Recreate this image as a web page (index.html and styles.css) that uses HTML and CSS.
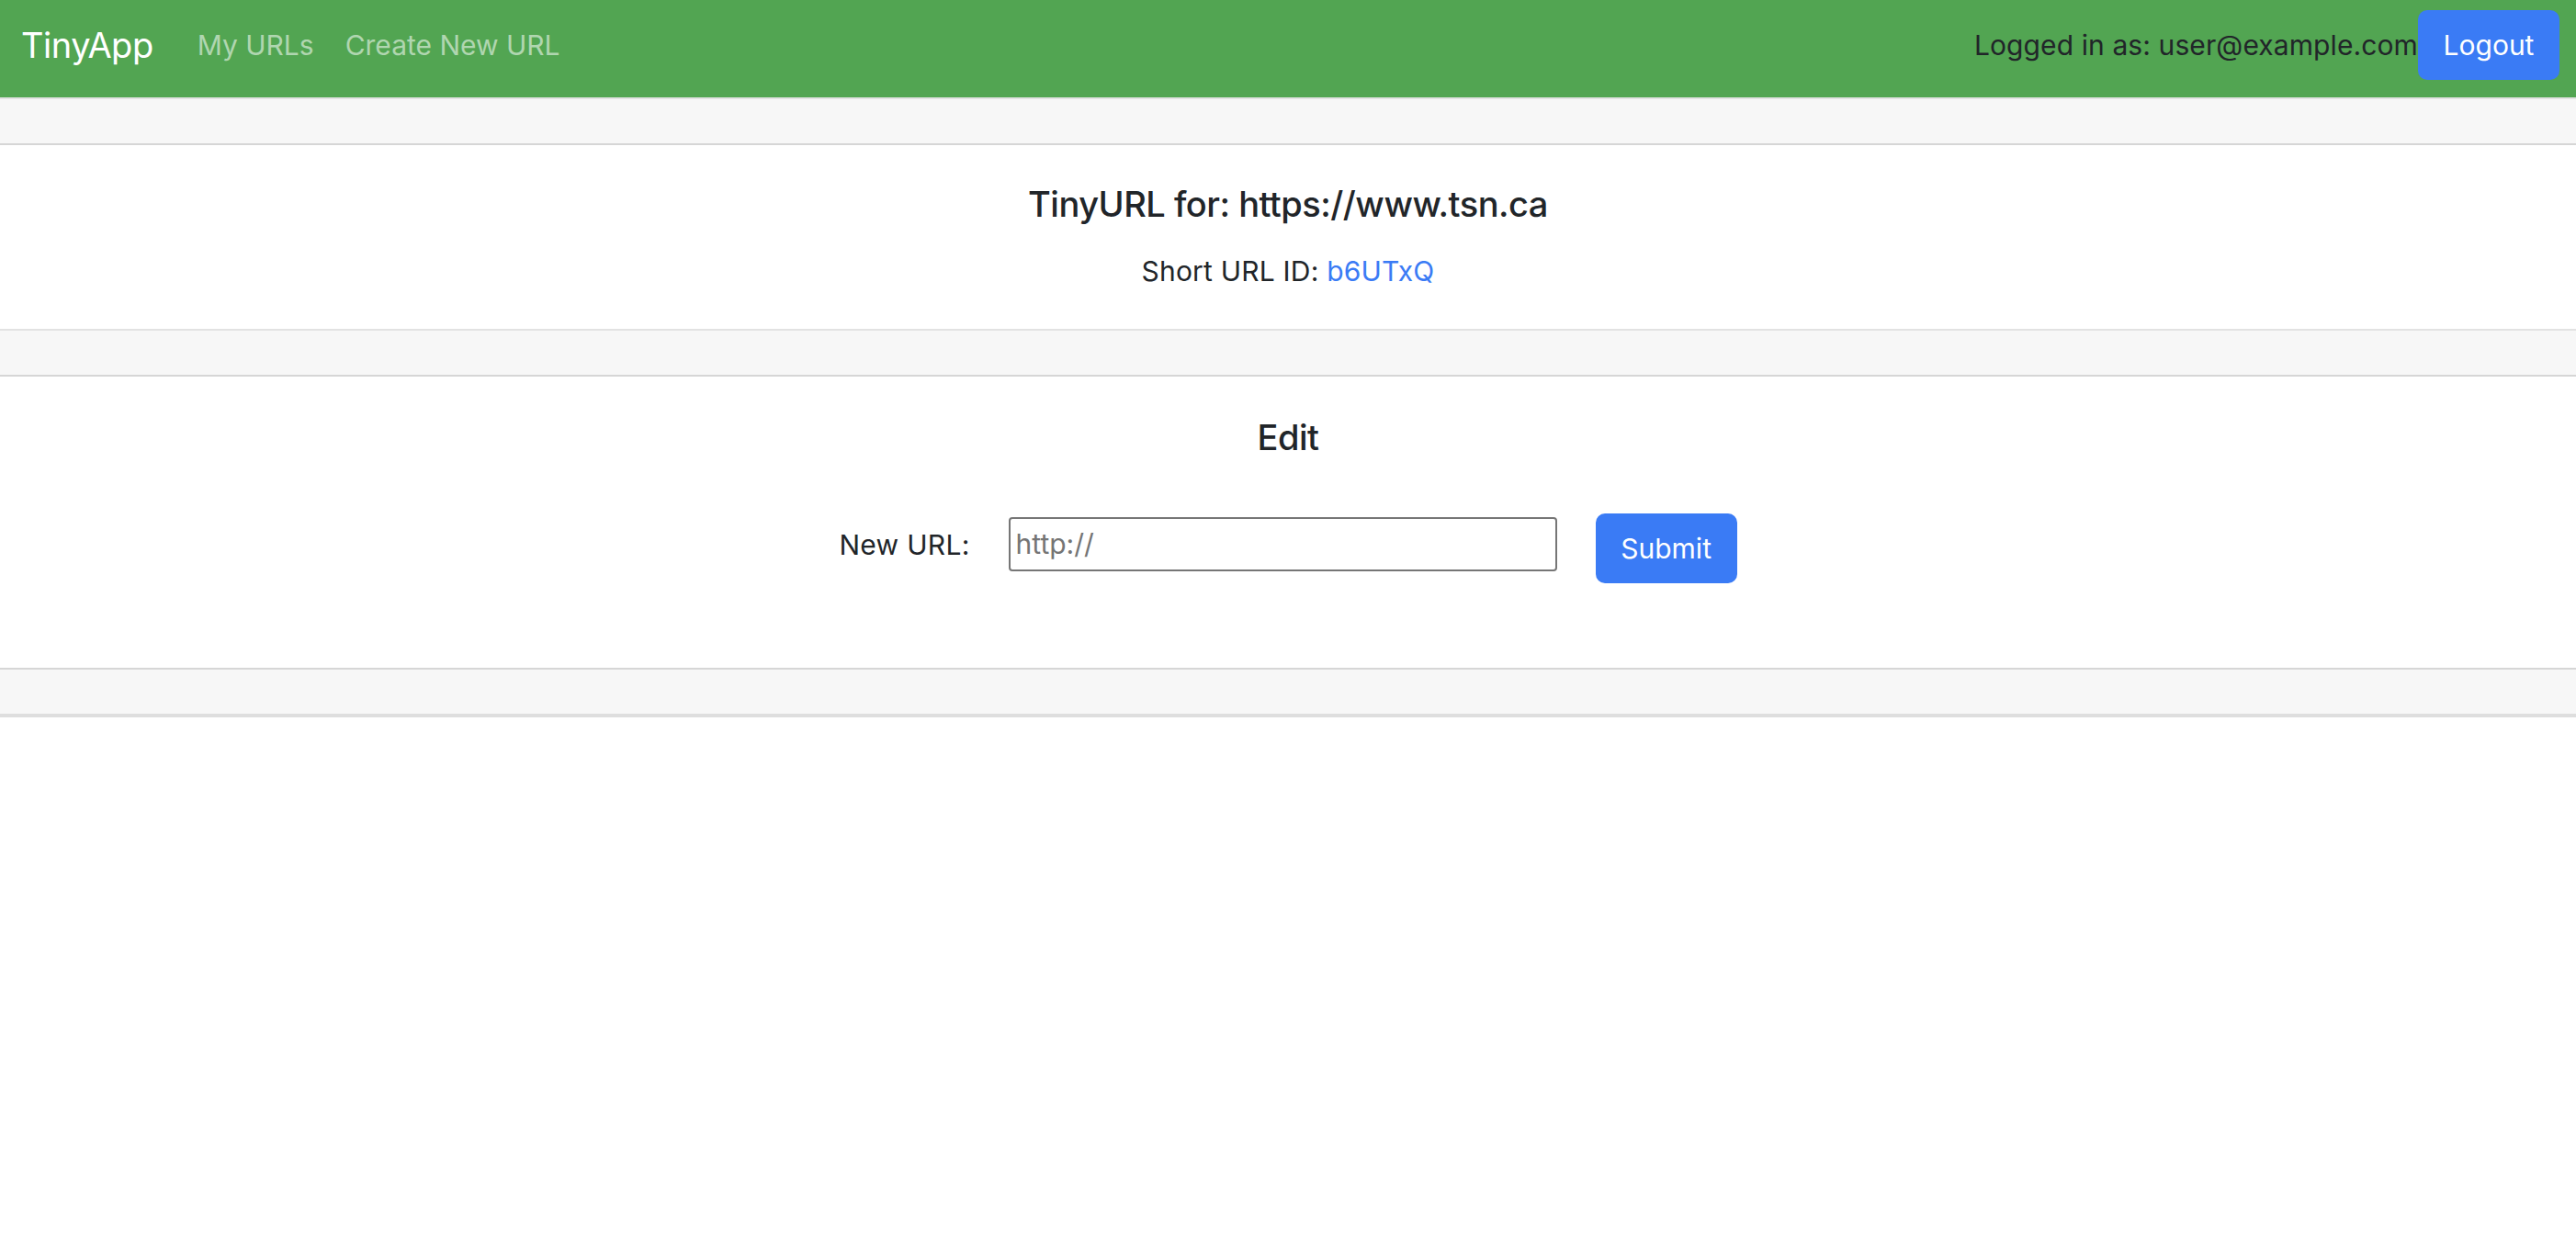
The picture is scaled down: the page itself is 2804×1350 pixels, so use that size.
FILE: index.html
```html
<!DOCTYPE html>
<html lang="en">
<head>
<meta charset="utf-8">
<title>TinyApp</title>
<link rel="stylesheet" href="styles.css">
</head>
<body>
<nav class="navbar">
  <a class="brand" href="#">TinyApp</a>
  <div class="nav-links">
    <a class="nav-link" href="#">My URLs</a>
    <a class="nav-link" href="#">Create New URL</a>
  </div>
  <div class="nav-right">
    <span class="logged">Logged in as: user@example.com</span>
    <button class="btn">Logout</button>
  </div>
</nav>
<div class="band band-first"></div>
<section class="card card-info">
  <h5 class="title">TinyURL for: https://www.tsn.ca</h5>
  <p class="short">Short URL ID: <a class="link" href="#">b6UTxQ</a></p>
</section>
<div class="band"></div>
<section class="card card-edit">
  <h5 class="title">Edit</h5>
  <form class="edit-form">
    <label class="label" for="newurl">New URL:</label>
    <input class="input" id="newurl" type="text" placeholder="http://">
    <button class="btn" type="button">Submit</button>
  </form>
</section>
<div class="band band-last"></div>
</body>
</html>
```

FILE: styles.css
```css
* { box-sizing: border-box; }
html, body { margin: 0; padding: 0; }
body {
  font-family: Inter, "Noto Sans", "Liberation Sans", sans-serif;
  color: #212529;
  background: #ffffff;
  font-size: 30px;
}
.navbar {
  height: 106px;
  background: #52a552;
  display: flex;
  align-items: center;
  padding: 0 18px 8px 23px;
}
.brand {
  color: #ffffff;
  font-size: 38px;
  text-decoration: none;
  margin-right: 48px;
  letter-spacing: -0.5px;
}
.nav-links {
  display: flex;
  gap: 34px;
}
.nav-link {
  color: #b0d6b0;
  text-decoration: none;
  font-size: 30px;
  letter-spacing: 0;
}
.nav-right {
  margin-left: auto;
  display: flex;
  align-items: center;
}
.logged {
  color: #212529;
  font-size: 30px;
  letter-spacing: 0.1px;
}
.btn {
  font-family: inherit;
  font-size: 30px;
  color: #ffffff;
  background: #3a7bf5;
  border: none;
  border-radius: 10px;
  height: 76px;
  width: 154px;
  padding: 0;
}
.band {
  height: 52px;
  background: #f7f7f7;
  border-top: 2px solid #e2e2e2;
  border-bottom: 2px solid #d6d6d6;
}
.band-last {
  height: 54px;
  border-top: 2px solid #d6d6d6;
  border-bottom: 4px solid #dedede;
}
.card {
  background: #ffffff;
  text-align: center;
}
.card-info {
  height: 200px;
  padding-top: 42px;
}
.card-edit {
  height: 317px;
  padding-top: 44px;
}
.title {
  margin: 0;
  font-size: 38px;
  font-weight: 500;
  line-height: 1.2;
  letter-spacing: -0.5px;
}
.short {
  margin: 27px 0 0;
  font-size: 30px;
  line-height: 1.5;
  letter-spacing: 0.2px;
}
.link {
  color: #3a7bf5;
  text-decoration: none;
}
.edit-form {
  margin-top: 59px;
  display: flex;
  justify-content: center;
  align-items: flex-start;
  gap: 42px;
}
.label {
  font-size: 30px;
  line-height: 45px;
  margin-top: 12px;
  letter-spacing: 0.3px;
}
.input {
  width: 597px;
  height: 59px;
  margin-top: 4px;
  border: 2px solid #767676;
  border-radius: 4px;
  font-family: inherit;
  font-size: 30px;
  padding: 0 6px;
  color: #212529;
}
.input::placeholder {
  color: #757575;
}
```
